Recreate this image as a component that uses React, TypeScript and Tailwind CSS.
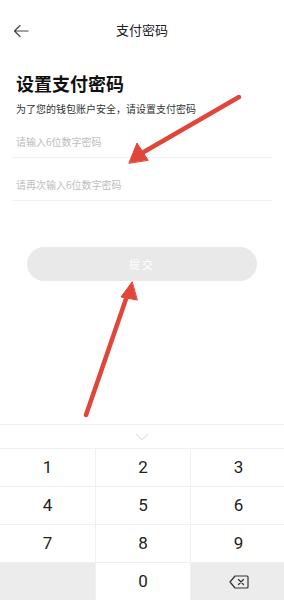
import { ChevronDown } from "lucide-react";

const keys = ["1", "2", "3", "4", "5", "6", "7", "8", "9"];

function BackspaceIcon() {
  return (
    <svg width="20" height="14" viewBox="0 0 20 14" fill="none" stroke="#333" strokeWidth="1.2">
      <path d="M6 1h12a1 1 0 0 1 1 1v10a1 1 0 0 1-1 1H6L1 7z" strokeLinejoin="round" />
      <path d="M9.5 4.5l5 5M14.5 4.5l-5 5" strokeLinecap="round" />
    </svg>
  );
}

export default function App() {
  return (
    <div
      className="relative w-[284px] h-[600px] bg-white flex flex-col overflow-hidden"
      style={{ fontFamily: '"Noto Sans CJK SC", "Noto Sans", sans-serif' }}
    >
      {/* header */}
      <div className="relative h-[62px] flex items-center justify-center">
        <svg className="absolute left-[13px] top-[24px]" width="16" height="14" viewBox="0 0 16 14" fill="none" stroke="#444" strokeWidth="1.2" strokeLinecap="round" strokeLinejoin="round">
          <path d="M15 7H1.5M7 1.5L1.5 7 7 12.5" />
        </svg>
        <span className="text-[13px] text-[#222] -mt-[2px]">支付密码</span>
      </div>

      <div className="px-4">
        <h1 className="text-[18px] font-bold text-[#111] leading-none mt-[12px]">设置支付密码</h1>
        <p className="text-[10px] text-[#333] mt-[12px] leading-none">为了您的钱包账户安全，请设置支付密码</p>
      </div>

      <div className="px-3 mt-[5px]">
        <div className="h-[39px] flex items-center px-1 pt-[6px] border-b border-[#f1f1f1] text-[10px] text-[#bdbdbd]">
          请输入6位数字密码
        </div>
        <div className="h-[43px] flex items-center px-1 pt-[10px] border-b border-[#f1f1f1] text-[10px] text-[#bdbdbd]">
          请再次输入6位数字密码
        </div>
      </div>

      <div className="px-[27px] mt-[46px]">
        <div className="h-[34px] rounded-full bg-[#e9e9e9] flex items-center justify-center text-[11px] text-white tracking-[2px]">
          提交
        </div>
      </div>

      <div className="flex-1" />

      {/* keyboard */}
      <div className="bg-[#f7f7f7] border-t border-[#f0f0f0]" style={{ fontFamily: '"Roboto", "Noto Sans", sans-serif' }}>
        <div className="h-[23px] flex items-center justify-center bg-white">
          <ChevronDown size={22} strokeWidth={0.8} color="#c4c4c4" />
        </div>
        <div className="grid grid-cols-[95px_94px_95px] gap-px bg-[#f0f0f0] pt-px">
          {keys.map((k) => (
            <div key={k} className="h-[37px] bg-white flex items-center justify-center text-[17px] text-[#222]">
              {k}
            </div>
          ))}
          <div className="h-[37px] bg-[#ececec]" />
          <div className="h-[37px] bg-white flex items-center justify-center text-[17px] text-[#222]">0</div>
          <div className="h-[37px] bg-[#ececec] flex items-center justify-center">
            <BackspaceIcon />
          </div>
        </div>
      </div>

      {/* red annotation arrows */}
      <svg className="absolute inset-0 pointer-events-none" width="284" height="600" viewBox="0 0 284 600">
        <g fill="#e0463a" stroke="#e0463a" strokeLinecap="round">
          <line x1="239" y1="97" x2="142" y2="153" strokeWidth="4.5" />
          <path d="M129 163 L137 143 L148 160 Z" strokeWidth="1" strokeLinejoin="round" />
          <line x1="86" y1="415" x2="127" y2="296" strokeWidth="4.5" />
          <path d="M132 282 L121 297 L137 300 Z" strokeWidth="1" strokeLinejoin="round" />
        </g>
      </svg>
    </div>
  );
}
